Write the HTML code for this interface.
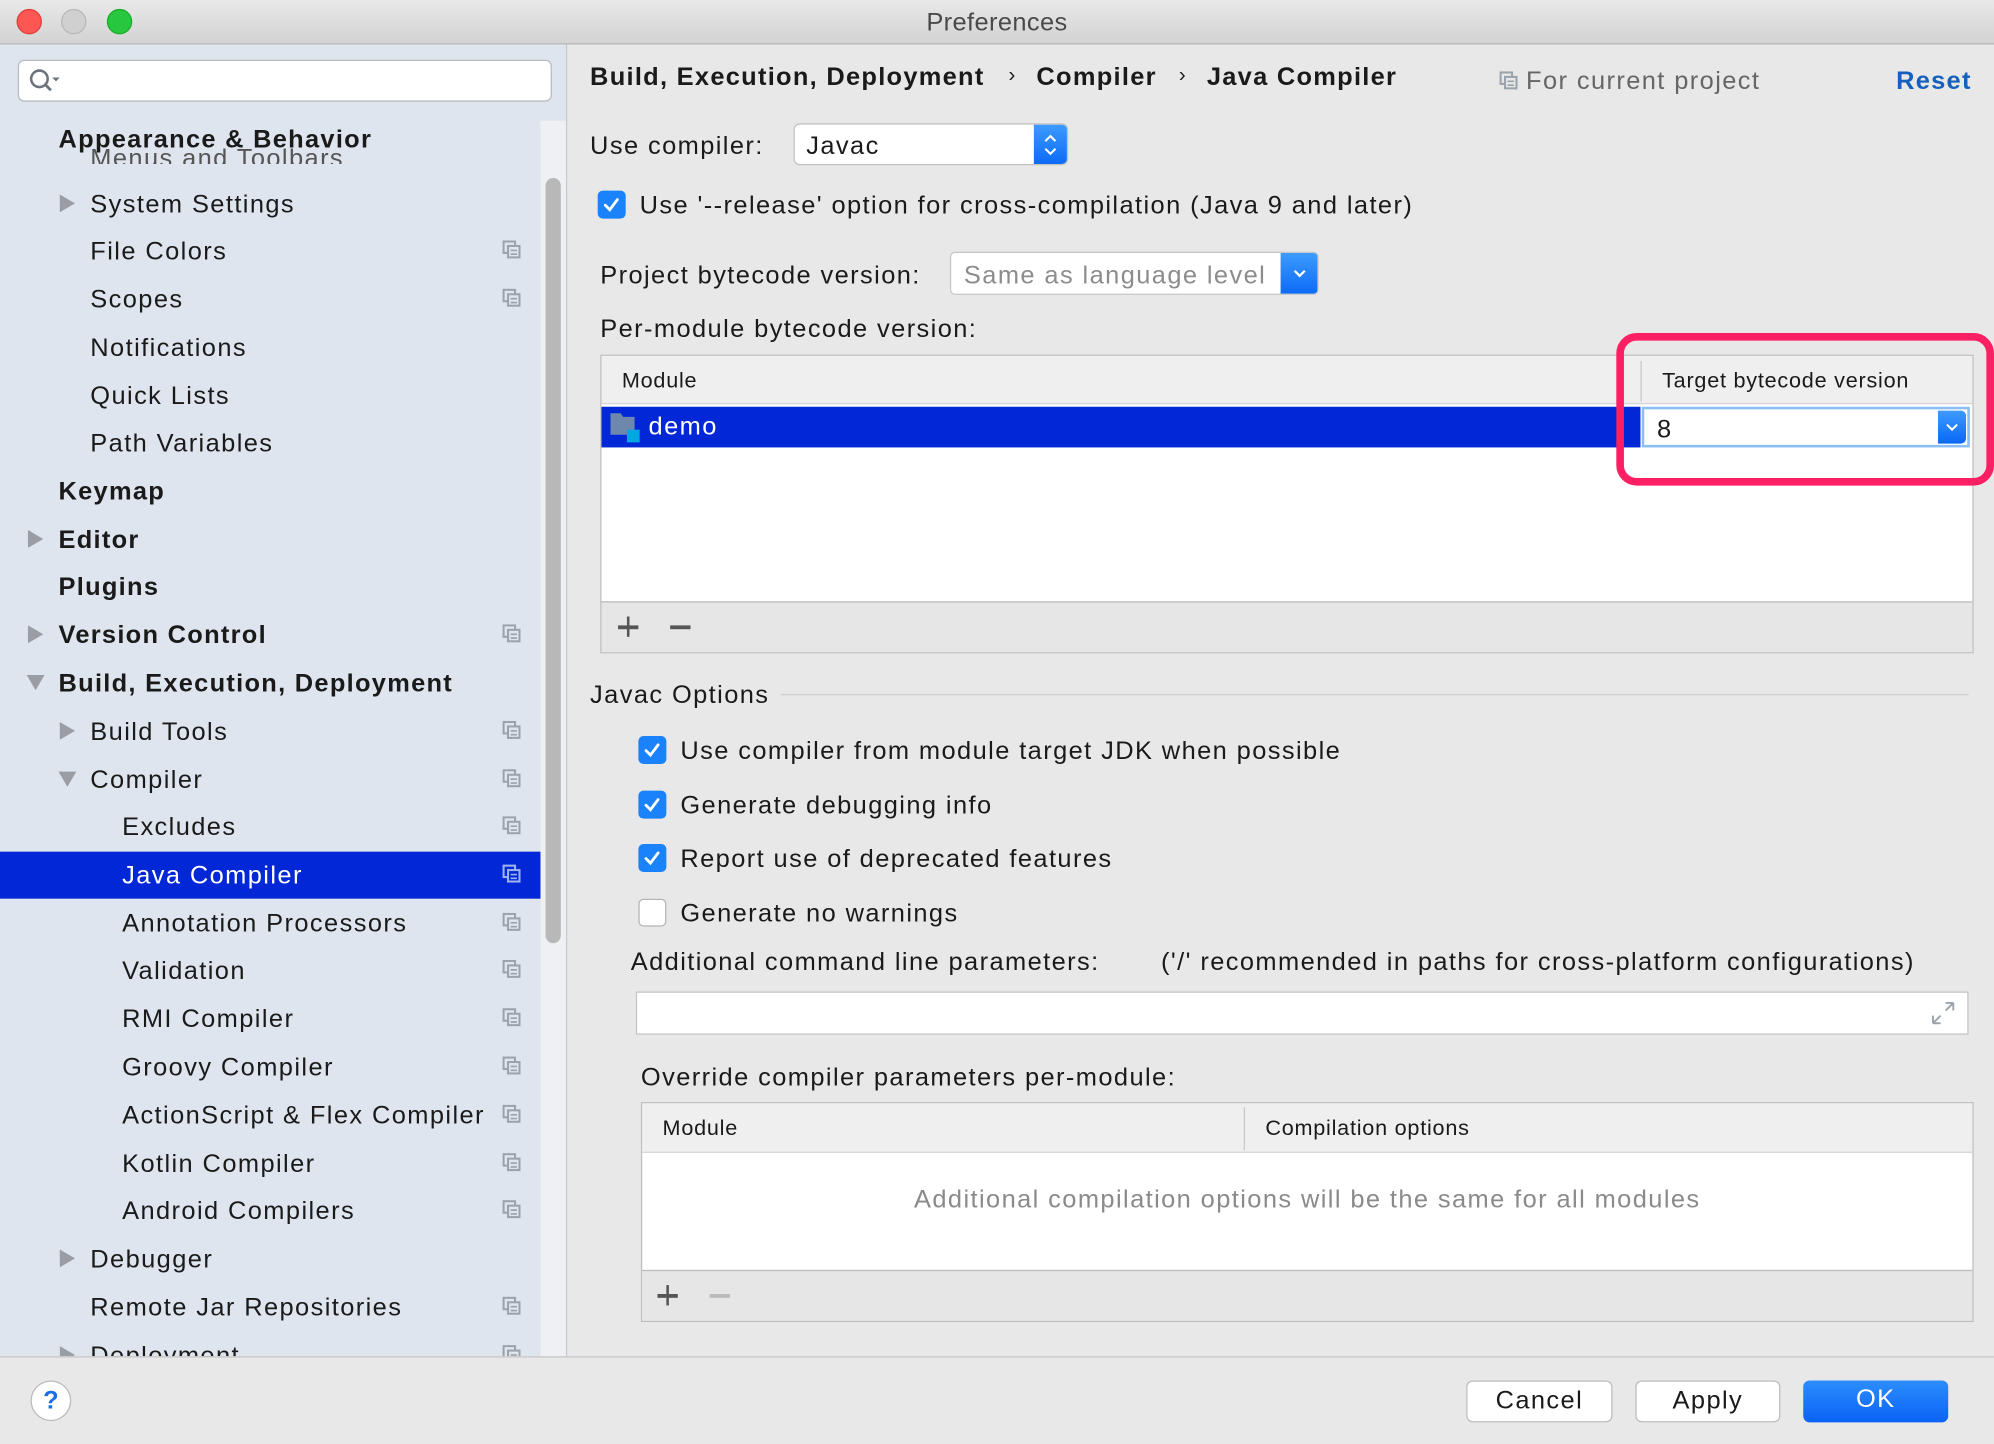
<!DOCTYPE html>
<html><head><meta charset="utf-8">
<style>
*{margin:0;padding:0;box-sizing:border-box}
html,body{width:1994px;height:1444px;overflow:hidden;background:#e8e8e8}
#w{position:absolute;left:0;top:0;width:1568px;height:1136px;transform:scale(1.27168,1.27113);transform-origin:0 0;font-family:"Liberation Sans",sans-serif;color:#1a1a1a;background:#e8e8e8}
.a{position:absolute;white-space:nowrap}
.t{font-size:20px;line-height:24px;letter-spacing:1.1px}
.b{font-weight:bold;letter-spacing:1px}
.arr{position:absolute;width:0;height:0;border-top:7px solid transparent;border-bottom:7px solid transparent;border-left:12px solid #9a9ea4}
.arrd{position:absolute;width:0;height:0;border-left:7px solid transparent;border-right:7px solid transparent;border-top:12px solid #9a9ea4}
.ic{position:absolute;width:15px;height:15px}
.cb{position:absolute;width:22px;height:22px;border-radius:4px;background:#1a82fb}
.cb svg{position:absolute;left:3px;top:3px}
</style></head><body><div id="w">
<div class="a" style="left:0;top:0;width:1568px;height:35px;background:linear-gradient(#e8e8e8,#d3d3d3);border-bottom:1px solid #b5b5b5"></div>
<div class="a" style="left:13px;top:7px;width:20px;height:20px;border-radius:50%;background:#fc5753;border:1px solid #df3f3b"></div>
<div class="a" style="left:48px;top:7px;width:20px;height:20px;border-radius:50%;background:#d0d0d0;border:1px solid #b8b8b8"></div>
<div class="a" style="left:84px;top:7px;width:20px;height:20px;border-radius:50%;background:#27c840;border:1px solid #1aab29"></div>
<div class="a t" style="left:0;width:1568px;text-align:center;top:6px;color:#4a4a4a;letter-spacing:.3px">Preferences</div>
<div class="a" style="left:0;top:35px;width:446px;height:1033px;background:#dfe5ee;border-right:1px solid #c9c9c9"></div>
<div class="a" style="left:425px;top:95px;width:20px;height:973px;background:#eef0f3"></div>
<div class="a" style="left:429px;top:140px;width:12px;height:602px;background:#b8b8b8;border-radius:6px"></div>
<div class="a" style="left:14px;top:47px;width:420px;height:33px;background:#fff;border:1px solid #b8bcc2;border-radius:5px"></div>
<svg class="a" style="left:22px;top:53px" width="28" height="22"><circle cx="9" cy="9" r="6.5" fill="none" stroke="#6c737b" stroke-width="2"/><line x1="13.5" y1="13.5" x2="18" y2="18" stroke="#6c737b" stroke-width="2.2"/><path d="M19 8h6l-3 3z" fill="#6c737b"/></svg>
<div class="a t" style="left:71px;top:113px;color:#555;clip-path:inset(0 0 8px 0)">Menus and Toolbars</div>
<div class="a t b" style="left:46px;top:98px;background:transparent">Appearance &amp; Behavior</div>
<div class="a" style="left:0;top:670px;width:425px;height:37px;background:#0227d6"></div>
<div id="side"></div>
<div class="a t b" style="left:464px;top:49px">Build, Execution, Deployment</div>
<div class="a t" style="left:793px;top:48px;font-size:16px">›</div>
<div class="a t b" style="left:815px;top:49px">Compiler</div>
<div class="a t" style="left:927px;top:48px;font-size:16px">›</div>
<div class="a t b" style="left:949px;top:49px">Java Compiler</div>
<svg class="ic" style="left:1179px;top:56px" viewBox="0 0 15 15"><rect x="1" y="1" width="9" height="9" fill="none" stroke="#9aa3ab" stroke-width="1.6"/><rect x="4.5" y="4.5" width="9" height="9" fill="#e8e8e8" stroke="#9aa3ab" stroke-width="1.6"/><path d="M6.5 8h5M6.5 11h5" stroke="#9aa3ab" stroke-width="1.3"/></svg>
<div class="a t" style="left:1200px;top:52px;color:#666">For current project</div>
<div class="a t b" style="left:1491px;top:52px;color:#1560bd">Reset</div>

<div class="a t" style="left:464px;top:103px">Use compiler:</div>
<div class="a" style="left:624px;top:97px;width:216px;height:33px;background:#fff;border:1px solid #c2c2c2;border-radius:5px;overflow:hidden"><div class="a" style="right:0;top:0;width:26px;height:33px;background:linear-gradient(#3d9bff,#0a68f5)"></div></div>
<svg class="a" style="left:817px;top:102px" width="18" height="24"><path d="M5 9l4-4 4 4M5 15l4 4 4-4" fill="none" stroke="#fff" stroke-width="1.6"/></svg>
<div class="a t" style="left:634px;top:103px">Javac</div>

<div class="cb" style="left:470px;top:150px"><svg width="16" height="16"><path d="M3 8.5l3.5 3.5 6-8" fill="none" stroke="#fff" stroke-width="2.2" stroke-linecap="round"/></svg></div>
<div class="a t" style="left:503px;top:150px">Use '--release' option for cross-compilation (Java 9 and later)</div>

<div class="a t" style="left:472px;top:205px">Project bytecode version:</div>
<div class="a" style="left:747px;top:198px;width:290px;height:34px;background:#fff;border:1px solid #c8c8c8;border-radius:4px;overflow:hidden"><div class="a" style="right:0;top:0;width:29px;height:34px;background:linear-gradient(#3d9bff,#0a68f5)"></div></div>
<svg class="a" style="left:1013px;top:207px" width="18" height="16"><path d="M5 6l4 4 4-4" fill="none" stroke="#fff" stroke-width="1.8"/></svg>
<div class="a t" style="left:758px;top:205px;color:#8c8c8c">Same as language level</div>

<div class="a t" style="left:472px;top:247px">Per-module bytecode version:</div>
<div class="a" style="left:472px;top:279px;width:1080px;height:235px;background:#fff;border:1px solid #bdbdbd"></div>
<div class="a" style="left:473px;top:280px;width:1078px;height:38px;background:#efefef;border-bottom:1px solid #d5d5d5"></div>
<div class="a" style="left:1290px;top:284px;width:1px;height:32px;background:#c8c8c8"></div>
<div class="a t" style="left:489px;top:288px;font-size:17px;letter-spacing:.6px">Module</div>
<div class="a t" style="left:1307px;top:288px;font-size:17px;letter-spacing:.6px">Target bytecode version</div>
<div class="a" style="left:473px;top:320px;width:817px;height:32px;background:#0227d6"></div>
<svg class="a" style="left:480px;top:325px" width="24" height="24"><path d="M0 0h8l2 3h9v14H0z" fill="#6e87ad"/><rect x="13" y="13" width="10" height="10" fill="#01a7e0"/></svg>
<div class="a t" style="left:510px;top:324px;color:#fff">demo</div>
<div class="a" style="left:1291px;top:320px;width:258px;height:32px;border:2px solid #8cbef6;background:#fff"></div>
<div class="a" style="left:1524px;top:323px;width:22px;height:26px;background:linear-gradient(#3d9bff,#0a68f5);border-radius:0 4px 4px 0"></div>
<svg class="a" style="left:1526px;top:328px" width="18" height="16"><path d="M5 6l4 4 4-4" fill="none" stroke="#fff" stroke-width="1.6"/></svg>
<div class="a t" style="left:1303px;top:326px">8</div>
<div class="a" style="left:473px;top:473px;width:1078px;height:40px;background:#e6e6e6;border-top:1px solid #bdbdbd"></div>
<div class="a" style="left:486px;top:492px;width:16px;height:2.5px;background:#555"></div>
<div class="a" style="left:492.8px;top:485px;width:2.5px;height:16px;background:#555"></div>
<div class="a" style="left:527px;top:492px;width:16px;height:2.5px;background:#555"></div>
<div class="a" style="left:1271px;top:262px;width:297px;height:120px;border:6px solid #fd1f63;border-radius:16px"></div>

<div class="a t" style="left:464px;top:535px">Javac Options</div>
<div class="a" style="left:614px;top:546px;width:934px;height:1px;background:#cfcfcf"></div>
<div class="cb" style="left:502px;top:579px"><svg width="16" height="16"><path d="M3 8.5l3.5 3.5 6-8" fill="none" stroke="#fff" stroke-width="2.2" stroke-linecap="round"/></svg></div>
<div class="a t" style="left:535px;top:579px">Use compiler from module target JDK when possible</div>
<div class="cb" style="left:502px;top:622px"><svg width="16" height="16"><path d="M3 8.5l3.5 3.5 6-8" fill="none" stroke="#fff" stroke-width="2.2" stroke-linecap="round"/></svg></div>
<div class="a t" style="left:535px;top:622px">Generate debugging info</div>
<div class="cb" style="left:502px;top:664px"><svg width="16" height="16"><path d="M3 8.5l3.5 3.5 6-8" fill="none" stroke="#fff" stroke-width="2.2" stroke-linecap="round"/></svg></div>
<div class="a t" style="left:535px;top:664px">Report use of deprecated features</div>
<div class="a" style="left:502px;top:707px;width:22px;height:22px;border-radius:4px;background:#fff;border:1px solid #b5b5b5"></div>
<div class="a t" style="left:535px;top:707px">Generate no warnings</div>
<div class="a t" style="left:496px;top:745px">Additional command line parameters:</div>
<div class="a t" style="left:913px;top:745px">('/' recommended in paths for cross-platform configurations)</div>
<div class="a" style="left:500px;top:780px;width:1048px;height:34px;background:#fff;border:1px solid #c3c3c3"></div>
<svg class="a" style="left:1517px;top:786px" width="22" height="22"><path d="M3 19l6-6M3 19v-6M3 19h6M19 3l-6 6M19 3v6M19 3h-6" fill="none" stroke="#9aa3ab" stroke-width="1.5"/></svg>
<div class="a t" style="left:504px;top:836px">Override compiler parameters per-module:</div>
<div class="a" style="left:504px;top:867px;width:1048px;height:173px;background:#fff;border:1px solid #bdbdbd"></div>
<div class="a" style="left:505px;top:868px;width:1046px;height:39px;background:#efefef;border-bottom:1px solid #d5d5d5"></div>
<div class="a" style="left:978px;top:871px;width:1px;height:34px;background:#c8c8c8"></div>
<div class="a t" style="left:521px;top:876px;font-size:17px;letter-spacing:.6px">Module</div>
<div class="a t" style="left:995px;top:876px;font-size:17px;letter-spacing:.6px">Compilation options</div>
<div class="a t" style="left:505px;width:1046px;text-align:center;top:932px;color:#8a8a8a">Additional compilation options will be the same for all modules</div>
<div class="a" style="left:505px;top:999px;width:1046px;height:40px;background:#e6e6e6;border-top:1px solid #bdbdbd"></div>
<div class="a" style="left:517px;top:1018px;width:16px;height:2.5px;background:#555"></div>
<div class="a" style="left:523.8px;top:1011px;width:2.5px;height:16px;background:#555"></div>
<div class="a" style="left:558px;top:1018px;width:16px;height:2.5px;background:#bbb"></div>
<div class="a" style="left:0;top:1067px;width:1568px;height:69px;background:#e8e8e8;border-top:1px solid #c6c6c6"></div>
<div class="a" style="left:24px;top:1086px;width:32px;height:32px;border-radius:50%;background:#fff;border:1px solid #bbb;color:#1a6fe8;font-size:20px;line-height:30px;text-align:center;font-weight:bold">?</div>
<div class="a t" style="left:1153px;top:1086px;width:115px;height:33px;background:#fff;border:1px solid #bdbdbd;border-radius:5px;text-align:center;line-height:31px">Cancel</div>
<div class="a t" style="left:1286px;top:1086px;width:114px;height:33px;background:#fff;border:1px solid #bdbdbd;border-radius:5px;text-align:center;line-height:31px">Apply</div>
<div class="a t" style="left:1418px;top:1086px;width:114px;height:33px;background:linear-gradient(#2c8dfd,#0a62f5);border-radius:5px;text-align:center;line-height:31px;color:#fff">OK</div>
</div>
<script>
var items=[
[160,71,"System Settings",0,1,0],[197,71,"File Colors",0,0,1],[235,71,"Scopes",0,0,1],[273,71,"Notifications",0,0,0],[311,71,"Quick Lists",0,0,0],[348,71,"Path Variables",0,0,0],
[386,46,"Keymap",1,0,0],[424,46,"Editor",1,1,0],[461,46,"Plugins",1,0,0],[499,46,"Version Control",1,1,1],[537,46,"Build, Execution, Deployment",1,2,0],
[575,71,"Build Tools",0,1,1],[613,71,"Compiler",0,2,1],[650,96,"Excludes",0,0,1],[688,96,"Java Compiler",0,0,1],[726,96,"Annotation Processors",0,0,1],
[763,96,"Validation",0,0,1],[801,96,"RMI Compiler",0,0,1],[839,96,"Groovy Compiler",0,0,1],[877,96,"ActionScript & Flex Compiler",0,0,1],[915,96,"Kotlin Compiler",0,0,1],
[952,96,"Android Compilers",0,0,1],[990,71,"Debugger",0,1,0],[1028,71,"Remote Jar Repositories",0,0,1],[1066,71,"Deployment",0,1,1]];
var h="";
items.forEach(function(it){
 var y=it[0],x=it[1],sel=it[2]=="Java Compiler",col=sel?"#fff":"#1a1a1a";
 var clip=y>1060?"clip-path:inset(0 0 12px 0);":"";
 h+='<div class="a t'+(it[3]?' b':'')+'" style="left:'+x+'px;top:'+(y-11)+'px;color:'+col+';'+clip+'">'+it[2].replace("&","&amp;")+'</div>';
 if(it[4]==1)h+='<div class="arr" style="left:'+(x-24)+'px;top:'+(y-7)+'px;'+(y>1060?'clip-path:inset(0 0 6px 0);':'')+'"></div>';
 if(it[4]==2)h+='<div class="arrd" style="left:'+(x-25)+'px;top:'+(y-6)+'px"></div>';
 if(it[5]){var c=sel?"#9fb3f0":"#9aa3ab",bg=sel?"#0227d6":"#dfe5ee";
  h+='<svg class="ic" style="left:395px;top:'+(y-8)+'px;'+(y>1060?'clip-path:inset(0 0 6px 0);':'')+'" viewBox="0 0 15 15"><rect x="1" y="1" width="9" height="9" fill="none" stroke="'+c+'" stroke-width="1.6"/><rect x="4.5" y="4.5" width="9" height="9" fill="'+bg+'" stroke="'+c+'" stroke-width="1.6"/><path d="M6.5 8h5M6.5 11h5" stroke="'+c+'" stroke-width="1.3"/></svg>';}
});
document.getElementById("side").outerHTML=h;
</script>
</body></html>
